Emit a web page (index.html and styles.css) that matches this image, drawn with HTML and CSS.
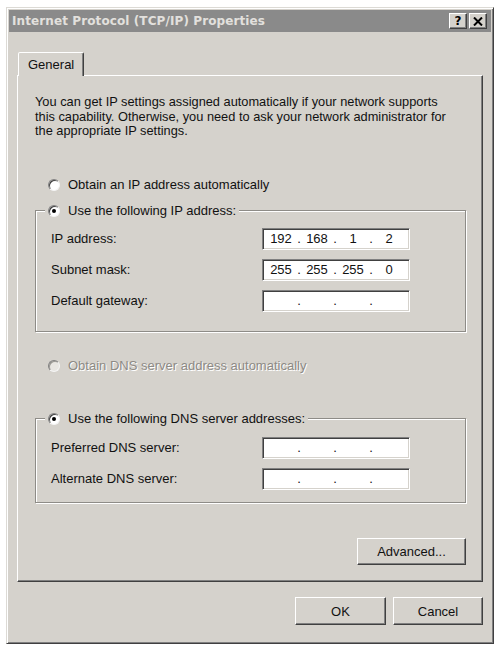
FILE: index.html
```html
<!DOCTYPE html>
<html lang="en">
<head>
  <meta charset="UTF-8" />
  <title>Internet Protocol (TCP/IP) Properties</title>
  <link rel="stylesheet" href="styles.css">
</head>
<body>
  <div class="window">
    <div class="titlebar">
      <span class="title">Internet Protocol (TCP/IP) Properties</span>
      <div class="caption-btns">
        <button class="cap-btn help">?</button>
        <button class="cap-btn close">
          <svg width="10" height="9" viewBox="0 0 10 9"><path d="M1 0.5 L9 8.5 M9 0.5 L1 8.5" stroke="#000" stroke-width="2"/></svg>
        </button>
      </div>
    </div>

    <div class="content">
      <div class="tabs">
        <div class="tab">General</div>
      </div>

      <div class="panel">
        <p class="desc">You can get IP settings assigned automatically if your network supports<br>this capability. Otherwise, you need to ask your network administrator for<br>the appropriate IP settings.</p>

        <div class="radio-row ip-auto"><span class="radio"></span>Obtain an IP address automatically</div>

        <fieldset class="group ip-group">
          <legend><span class="radio checked"></span>Use the following IP address:</legend>
          <div class="field-row">
            <span class="label">IP address:</span>
            <div class="ip-box"><span>192</span><i>.</i><span>168</span><i>.</i><span>1</span><i>.</i><span>2</span></div>
          </div>
          <div class="field-row">
            <span class="label">Subnet mask:</span>
            <div class="ip-box"><span>255</span><i>.</i><span>255</span><i>.</i><span>255</span><i>.</i><span>0</span></div>
          </div>
          <div class="field-row">
            <span class="label">Default gateway:</span>
            <div class="ip-box"><span></span><i>.</i><span></span><i>.</i><span></span><i>.</i><span></span></div>
          </div>
        </fieldset>

        <div class="radio-row dns-auto disabled"><span class="radio"></span>Obtain DNS server address automatically</div>

        <fieldset class="group dns-group">
          <legend><span class="radio checked"></span>Use the following DNS server addresses:</legend>
          <div class="field-row">
            <span class="label">Preferred DNS server:</span>
            <div class="ip-box"><span></span><i>.</i><span></span><i>.</i><span></span><i>.</i><span></span></div>
          </div>
          <div class="field-row">
            <span class="label">Alternate DNS server:</span>
            <div class="ip-box"><span></span><i>.</i><span></span><i>.</i><span></span><i>.</i><span></span></div>
          </div>
        </fieldset>

        <div class="advanced-row">
          <button class="btn advanced">Advanced...</button>
        </div>
      </div>

      <div class="dialog-btns">
        <button class="btn ok">OK</button>
        <button class="btn cancel">Cancel</button>
      </div>
    </div>
  </div>
</body>
</html>
```

FILE: styles.css
```css
:root {
  --face: #d5d2cc;
  --shadow: #808080;
  --dark: #404040;
  --light: #ffffff;
}

body {
  margin: 0;
  background: #ffffff;
  font-family: 'Liberation Sans', Arial, sans-serif;
  font-size: 13px;
  color: #111;
}

/* === WINDOW FRAME === */
.window {
  width: 488px;
  height: 637px;
  margin: 7px 0 0 6px;
  box-sizing: border-box;
  background: var(--face);
  border: 1px solid;
  border-color: #dcdad5 var(--dark) var(--dark) #dcdad5;
  box-shadow: inset 1px 1px 0 var(--light), inset -1px -1px 0 var(--shadow);
  padding: 2px;
}

.titlebar {
  height: 22px;
  background: #8a8a8a;
  display: flex;
  align-items: center;
  justify-content: space-between;
  padding: 0 4px 0 3px;
}

.title {
  font-family: 'DejaVu Sans', Verdana, sans-serif;
  font-weight: bold;
  font-size: 12px;
  color: #e2e0dd;
  letter-spacing: 0.1px;
}

.caption-btns {
  display: flex;
  gap: 2px;
}

.cap-btn {
  width: 18px;
  height: 16px;
  padding: 0;
  display: flex;
  align-items: center;
  justify-content: center;
  background: var(--face);
  border: 1px solid;
  border-color: var(--light) var(--dark) var(--dark) var(--light);
  box-shadow: inset -1px -1px 0 var(--shadow);
  font-family: 'DejaVu Sans', sans-serif;
  font-weight: bold;
  font-size: 12px;
  color: #000;
}

/* === TABS === */
.content {
  padding: 20px 8px 0 8px;
}

.tabs {
  display: flex;
  padding-left: 1px;
}

.tab {
  position: relative;
  z-index: 1;
  height: 23px;
  margin-bottom: -1px;
  padding: 0 9px;
  display: flex;
  align-items: center;
  background: var(--face);
  border: 1px solid;
  border-bottom: none;
  border-color: var(--light) var(--dark) transparent var(--light);
  border-radius: 2px 2px 0 0;
  box-shadow: inset -1px 0 0 var(--shadow);
}

.panel {
  height: 507px;
  box-sizing: border-box;
  border: 1px solid;
  border-color: var(--light) var(--dark) var(--dark) var(--light);
  box-shadow: inset -1px -1px 0 var(--shadow);
  padding: 19px 16px 0 17px;
}

.desc {
  margin: 0;
  line-height: 14.5px;
  font-size: 12.8px;
}

/* === RADIOS === */
.radio-row,
legend {
  display: flex;
  align-items: center;
  height: 16px;
  line-height: 16px;
}

.radio {
  width: 12px;
  height: 12px;
  box-sizing: border-box;
  border-radius: 50%;
  background: #fff;
  border: 1px solid;
  border-color: var(--shadow) #f4f4f4 #f4f4f4 var(--shadow);
  box-shadow: inset 1px 1px 0 var(--dark);
  margin-right: 8px;
  display: flex;
  align-items: center;
  justify-content: center;
}

.radio.checked::after {
  content: '';
  width: 4px;
  height: 4px;
  border-radius: 50%;
  background: #000;
}

.radio-row {
  padding-left: 13px;
}

.ip-auto {
  margin-top: 38px;
}

.dns-auto {
  margin-top: 26px;
}

.disabled {
  color: #8d8a85;
  text-shadow: 1px 1px 0 #fff;
}

.disabled .radio {
  background: #e8e6e2;
  box-shadow: inset 1px 1px 0 #9a9893;
}

/* === GROUP BOXES === */
.group {
  margin: 10px 0 0 0;
  border: 1px solid #8e8c87;
  box-shadow: inset 1px 1px 0 #fff, 1px 1px 0 #fff;
  padding: 9px 0 19px 15px;
}

.dns-group {
  margin-top: 37px;
  padding-top: 10px;
  padding-bottom: 12px;
}

legend {
  margin-left: -6px;
  padding: 0 3px;
  background: var(--face);
}

.field-row {
  display: flex;
  align-items: center;
  height: 22px;
}

.field-row + .field-row {
  margin-top: 9px;
}

.label {
  width: 211px;
}

.ip-box {
  width: 148px;
  height: 22px;
  box-sizing: border-box;
  background: #fff;
  border: 1px solid;
  border-color: var(--shadow) #fff #fff var(--shadow);
  box-shadow: inset 1px 1px 0 var(--dark), inset -1px -1px 0 var(--face);
  display: flex;
  align-items: center;
  padding-left: 3px;
}

.ip-box span {
  width: 30px;
  text-align: center;
}

.ip-box i {
  width: 6px;
  font-style: normal;
  text-align: center;
}

/* === BUTTONS === */
.btn {
  font-family: 'Liberation Sans', Arial, sans-serif;
  font-size: 13px;
  color: #111;
  background: var(--face);
  border: 1px solid;
  border-color: var(--light) var(--dark) var(--dark) var(--light);
  box-shadow: inset -1px -1px 0 var(--shadow);
  padding: 0;
}

.advanced-row {
  display: flex;
  justify-content: flex-end;
  margin-top: 35px;
}

.advanced {
  width: 109px;
  height: 27px;
}

.dialog-btns {
  display: flex;
  justify-content: flex-end;
  gap: 7px;
  margin-top: 15px;
}

.ok {
  width: 91px;
  height: 28px;
}

.cancel {
  width: 90px;
  height: 28px;
}
```
